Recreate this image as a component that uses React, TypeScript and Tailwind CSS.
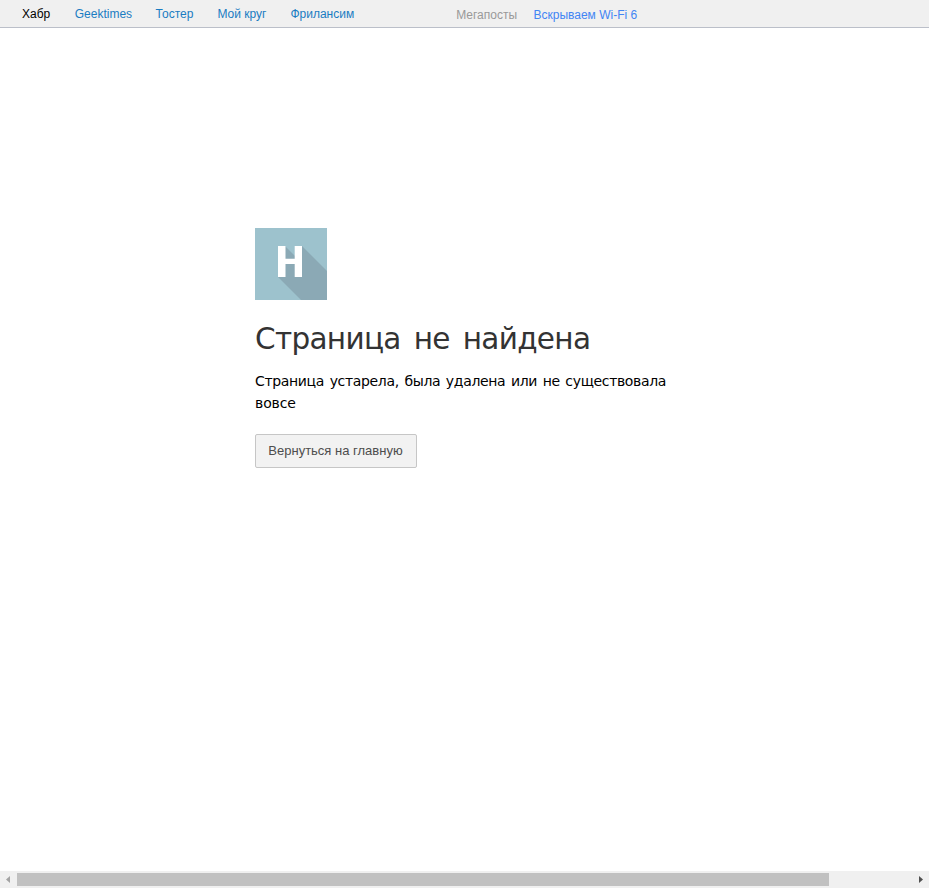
const links = [
  { label: "Geektimes", left: "ml-[24.5px]" },
  { label: "Тостер", left: "ml-[23.5px]" },
  { label: "Мой круг", left: "ml-[24px]" },
  { label: "Фрилансим", left: "ml-[24px]" },
];

function TopBar() {
  return (
    <nav className="flex h-7 shrink-0 items-start border-b border-[#bbbfc9] bg-[#f0f0f0] pl-[22px] pt-[5px] text-xs leading-[18px] whitespace-nowrap">
      <div className="flex w-[434.2px] text-[#1a7cc2]">
        <a className="text-black">Хабр</a>
        {links.map((l) => (
          <a key={l.label} className={l.left}>{l.label}</a>
        ))}
      </div>
      <div className="flex gap-[16.4px] pt-px">
        <span className="text-[#999999]">Мегапосты</span>
        <a className="text-[#4285f4]">Вскрываем Wi-Fi 6</a>
      </div>
    </nav>
  );
}

function Logo() {
  return (
    <svg className="block size-[72px]" viewBox="0 0 72 72">
      <rect width="72" height="72" fill="#9dc2cd" />
      <path d="M30 18L40 28V18H47L72 43V72H46L23 49V36H30Z" fill="#8ba9b5" />
      <path d="M23 18H30.5V30.7H39.7V18H47V49H39.7V36H30.5V49H23Z" fill="#fff" />
    </svg>
  );
}

function ScrollBar() {
  return (
    <div className="flex h-[17px] shrink-0 items-center bg-[#f0f0f0]">
      <div className="flex w-[17px] pl-[6px]">
        <svg className="h-[7px] w-1" viewBox="0 0 4 7"><path d="M4 0V7L0 3.5Z" fill="#a3a3a3" /></svg>
      </div>
      <div className="h-[13px] w-[812px] bg-[#c1c1c1]" />
      <div className="ml-auto flex w-[17px] pl-[7px]">
        <svg className="h-[7px] w-1" viewBox="0 0 4 7"><path d="M0 0V7L4 3.5Z" fill="#505050" /></svg>
      </div>
    </div>
  );
}

export default function App() {
  return (
    <div className="flex h-screen flex-col overflow-hidden bg-white font-['Liberation_Sans',Arial,sans-serif]">
      <TopBar />
      <main className="flex-1 pl-[255px] pt-[200px]">
        <Logo />
        <h1 className="mt-[21px] font-['DejaVu_Sans',Verdana,sans-serif] text-[29.5px] leading-9 tracking-[-0.68px] whitespace-nowrap text-[#333] [word-spacing:4.2px]">
          Страница не найдена
        </h1>
        <p className="mt-[13px] w-[430px] font-['DejaVu_Sans',Verdana,sans-serif] text-sm leading-[22px] tracking-[-0.34px] text-black [word-spacing:1.5px]">
          Страница устарела, была удалена или не существовала
          <br />
          <span className="tracking-[-0.1px]">вовсе</span>
        </p>
        <button className="mt-5 h-[34px] w-[162px] rounded-[2px] border border-[#c6c6c6] bg-[#f2f2f2] pr-px pb-px text-[13px] whitespace-nowrap text-[#4d4d4d]">
          Вернуться на главную
        </button>
      </main>
      <ScrollBar />
    </div>
  );
}
